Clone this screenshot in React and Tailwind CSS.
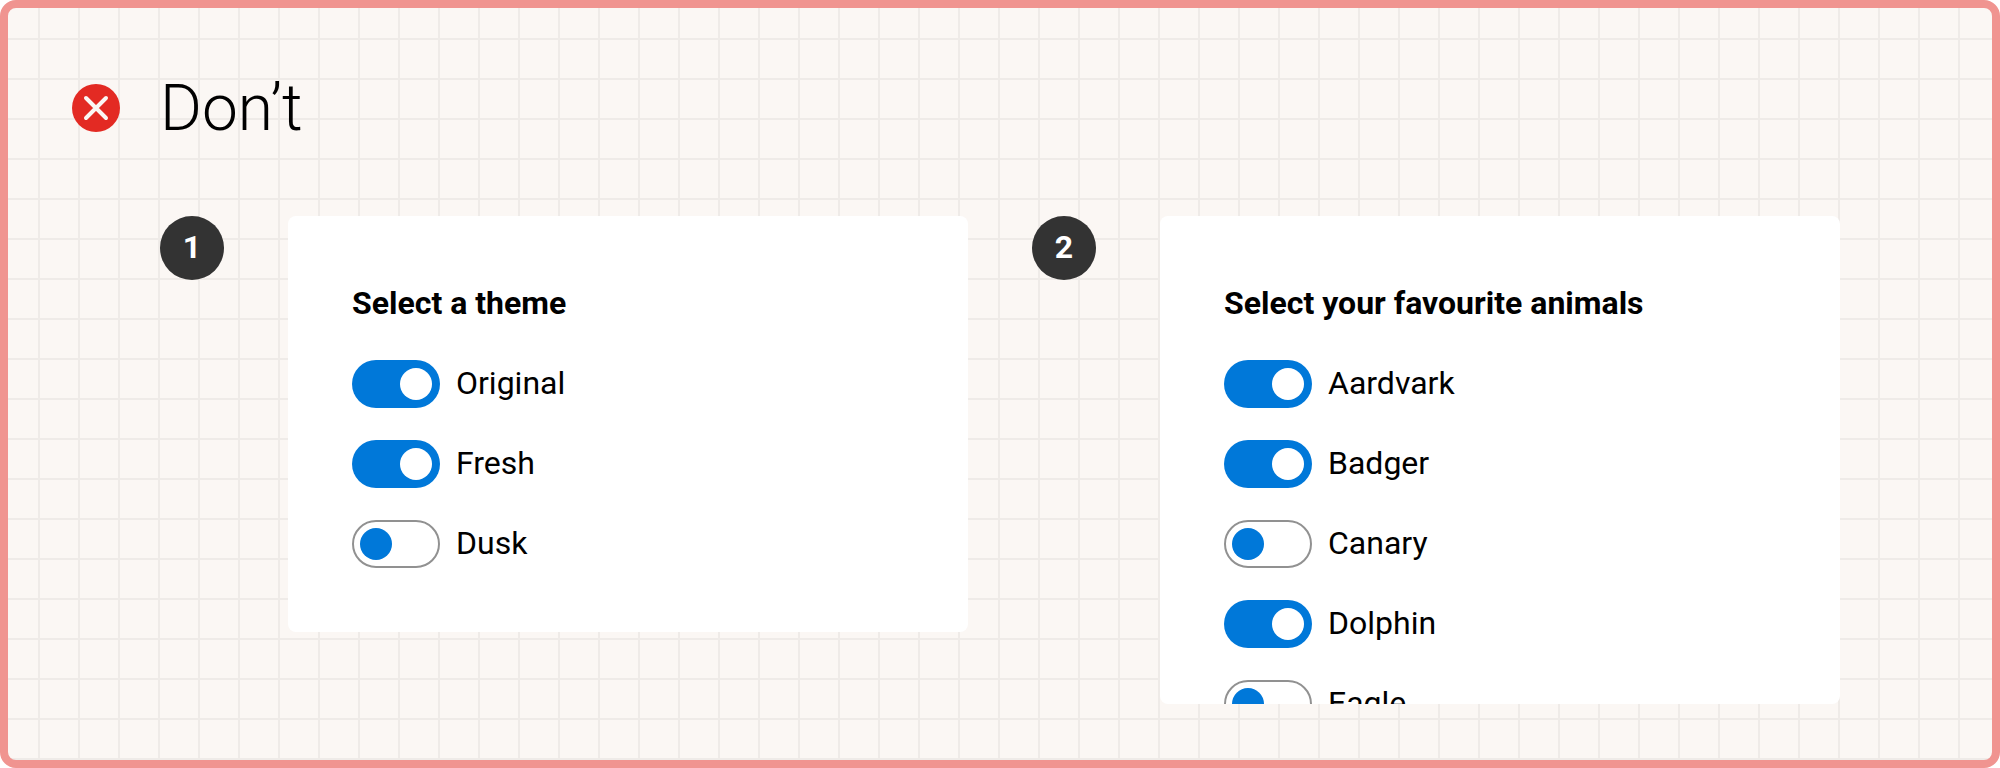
const themes = [
  { name: "Original", on: true },
  { name: "Fresh", on: true },
  { name: "Dusk", on: false },
];

const animals = [
  { name: "Aardvark", on: true },
  { name: "Badger", on: true },
  { name: "Canary", on: false },
  { name: "Dolphin", on: true },
  { name: "Eagle", on: false },
];

function Toggle({ on }) {
  return on ? (
    <span className="flex h-12 w-[88px] shrink-0 items-center justify-end rounded-full bg-[#0078d9] px-2">
      <span className="size-8 rounded-full bg-white" />
    </span>
  ) : (
    <span className="flex h-12 w-[88px] shrink-0 items-center rounded-full border-2 border-[#919191] bg-white px-1.5">
      <span className="size-8 rounded-full bg-[#0078d9]" />
    </span>
  );
}

function Example({ number, title, options, height }) {
  return (
    <section className="flex items-start gap-16">
      <div className="flex size-16 items-center justify-center rounded-full bg-[#333333] text-[32px] leading-[48px] font-bold text-white">
        <span className="-mt-0.5">{number}</span>
      </div>
      <div className={`w-[680px] overflow-hidden rounded-lg bg-white px-16 pt-16 ${height}`}>
        <h2 className="-mt-px mb-[33px] text-[32px] leading-[48px] font-bold">{title}</h2>
        <ul className="flex flex-col gap-8">
          {options.map((option) => (
            <li key={option.name} className="flex items-center gap-4">
              <Toggle on={option.on} />
              <span className="-mt-0.5 text-[32px] leading-[46px]">{option.name}</span>
            </li>
          ))}
        </ul>
      </div>
    </section>
  );
}

export default function App() {
  return (
    <div className="h-[768px] w-[2000px] bg-white font-['Roboto',sans-serif] text-black">
      <main className="flex h-full w-full flex-col gap-[70px] overflow-hidden rounded-2xl border-8 border-[#f09490] bg-[#fbf7f4] bg-[linear-gradient(to_right,transparent_38px,#efebe8_38px),linear-gradient(to_bottom,transparent_38px,#efebe8_38px)] bg-[length:40px_40px] bg-[position:-8px_-8px] pt-[62px]">
        <header className="flex h-[76px] items-center gap-10 pl-16">
          <svg className="size-12 shrink-0" viewBox="0 0 48 48" fill="none">
            <circle cx="24" cy="24" r="24" fill="#e32a23" />
            <path d="M14 14 34 34M34 14 14 34" stroke="#fbf7f4" strokeWidth="4" strokeLinecap="round" />
          </svg>
          <h1 className="pt-0.5 text-[64px] leading-[76px] font-light">Don’t</h1>
        </header>
        <div className="flex items-start gap-16 pl-[152px]">
          <Example number="1" title="Select a theme" options={themes} height="h-[416px]" />
          <Example number="2" title="Select your favourite animals" options={animals} height="h-[488px]" />
        </div>
      </main>
    </div>
  );
}
